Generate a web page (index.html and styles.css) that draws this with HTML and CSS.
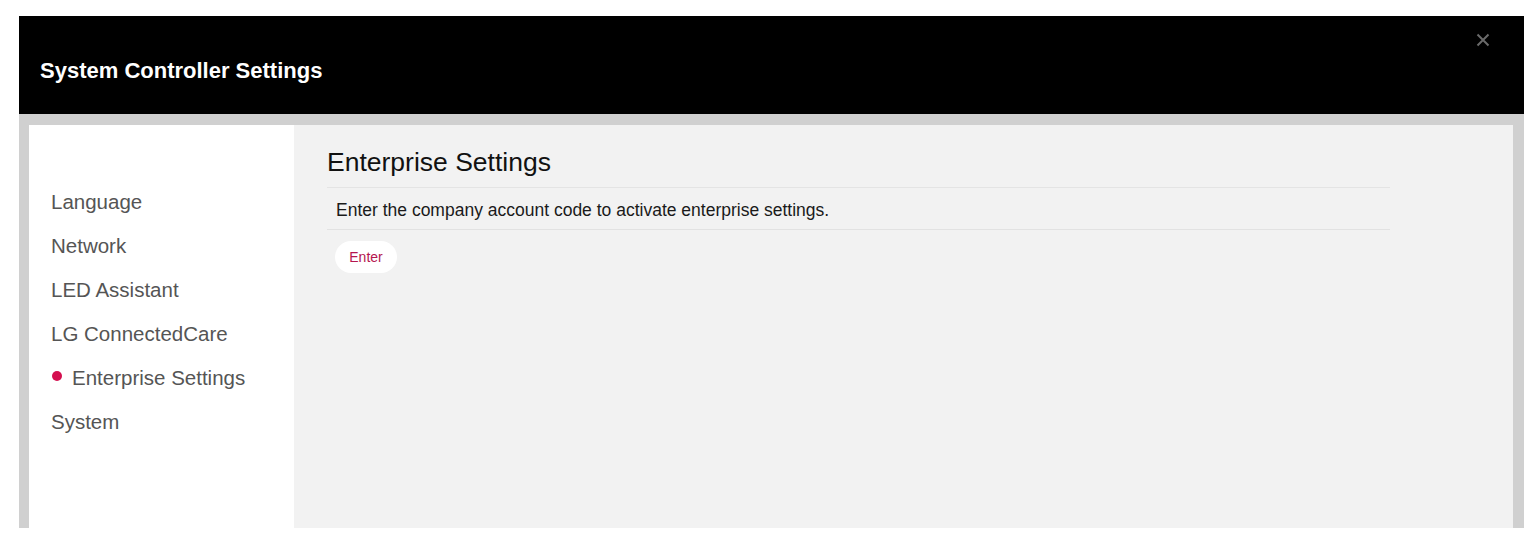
FILE: index.html
```html
<!DOCTYPE html>
<html lang="en">
<head>
<meta charset="utf-8">
<title>System Controller Settings</title>
<link rel="stylesheet" href="styles.css">
</head>
<body>
<div class="dialog">
  <header class="dialog-header">
    <h1 class="dialog-title">System Controller Settings</h1>
    <button class="close-btn" aria-label="Close">
      <svg width="14" height="14" viewBox="0 0 14 14"><path d="M1.5 1.5 L12.5 12.5 M12.5 1.5 L1.5 12.5" stroke="#6a6a6a" stroke-width="2" fill="none"/></svg>
    </button>
  </header>
  <div class="dialog-body">
    <div class="panel">
      <nav class="sidebar">
        <ul class="menu">
          <li class="menu-item">Language</li>
          <li class="menu-item">Network</li>
          <li class="menu-item">LED Assistant</li>
          <li class="menu-item">LG ConnectedCare</li>
          <li class="menu-item active"><span class="dot"></span>Enterprise Settings</li>
          <li class="menu-item">System</li>
        </ul>
      </nav>
      <main class="content">
        <h2 class="section-title">Enterprise Settings</h2>
        <div class="section">
          <p class="section-text">Enter the company account code to activate enterprise settings.</p>
        </div>
        <button class="pill-btn">Enter</button>
      </main>
    </div>
  </div>
</div>
</body>
</html>
```
FILE: styles.css
```css
html, body {
  margin: 0;
  padding: 0;
  background: #ffffff;
  font-family: "Liberation Sans", Arial, sans-serif;
}

.dialog {
  margin: 16px 0 0 19px;
  width: 1505px;
}

.dialog-header {
  position: relative;
  background: #000000;
  height: 98px;
  box-sizing: border-box;
  padding: 42px 0 0 21px;
}

.dialog-title {
  margin: 0;
  color: #ffffff;
  font-size: 22px;
  font-weight: bold;
  line-height: 26px;
}

.close-btn {
  position: absolute;
  top: 17px;
  right: 34px;
  width: 14px;
  height: 14px;
  padding: 0;
  border: 0;
  background: transparent;
  display: flex;
}

.dialog-body {
  background: #d0d0d0;
  padding: 11px 11px 0 10px;
  height: 414px;
  box-sizing: border-box;
}

.panel {
  display: flex;
  height: 100%;
}

.sidebar {
  width: 265px;
  background: #ffffff;
  padding-top: 55px;
  box-sizing: border-box;
}

.menu {
  list-style: none;
  margin: 0;
  padding: 0 0 0 22px;
}

.menu-item {
  font-size: 20.5px;
  line-height: 44px;
  color: #555555;
  display: flex;
  align-items: center;
}

.menu-item.active .dot {
  width: 10px;
  height: 10px;
  border-radius: 50%;
  background: #d40f4f;
  margin: 0 10px 4px 1px;
}

.content {
  flex: 1;
  background: #f2f2f2;
  padding: 22px 0 0 33px;
  box-sizing: border-box;
}

.section-title {
  margin: 0;
  font-size: 26.5px;
  font-weight: normal;
  line-height: 30px;
  color: #111111;
  padding-bottom: 10px;
}

.section {
  width: 1063px;
  border-top: 1px solid #e4e4e4;
  border-bottom: 1px solid #e2e2e2;
}

.section-text {
  margin: 0;
  padding: 12px 9px 9px;
  font-size: 17.5px;
  line-height: 20px;
  color: #1a1a1a;
}

.pill-btn {
  margin: 11px 0 0 8px;
  width: 62px;
  height: 32px;
  border-radius: 16px;
  border: 0;
  background: #ffffff;
  color: #b5164f;
  font-family: "Liberation Sans", Arial, sans-serif;
  font-size: 14px;
  padding: 0;
}
```
